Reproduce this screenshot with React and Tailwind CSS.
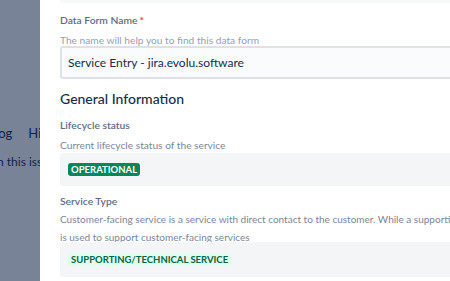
export default function App() {
  return (
    <div
      className="relative w-[450px] h-[281px] overflow-hidden bg-white flex"
      style={{ fontFamily: 'Lato, "Noto Sans", sans-serif' }}
    >
      {/* Backdrop page behind the overlay */}
      <div className="relative w-[40px] shrink-0 bg-white overflow-hidden">
        <div className="absolute left-[-8px] top-[124px] flex gap-[16px] whitespace-nowrap text-[13px] text-[#172b4d]">
          <span>Log</span>
          <span>History</span>
        </div>
        <div className="absolute left-[-3px] top-[153px] whitespace-nowrap text-[12px] text-[#172b4d]">
          n this issue
        </div>
        <div className="absolute inset-0 bg-[#091e42]/55"></div>
      </div>

      {/* Side panel */}
      <div className="flex-1 pl-[20px] flex flex-col text-[#172b4d]">
        <div className="h-[3px] bg-[#f7f8f9] rounded-b-[3px]"></div>

        <div className="mt-[10px] flex items-center text-[10.3px] font-semibold text-[#5e6c84] leading-[14px]">
          Data Form Name<span className="text-[#de350b] ml-[2px]">*</span>
        </div>
        <div className="mt-[6px] text-[10.2px] text-[#97a0af] leading-[14px]">
          The name will help you to find this data form
        </div>
        <div className="mt-[-1px] h-[33px] border-2 border-r-0 border-[#dfe1e6] bg-[#fafbfc] rounded-l-[3px] flex items-center pl-[6px] text-[12px] text-[#172b4d]">
          Service Entry - jira.evolu.software
        </div>

        <div className="mt-[11px] text-[14px] font-medium text-[#172b4d] leading-[18px]">
          General Information
        </div>

        <div className="mt-[10px] text-[10.3px] font-semibold text-[#5e6c84] leading-[14px]">
          Lifecycle status
        </div>
        <div className="mt-[6px] text-[10.2px] text-[#7a869a] leading-[14px]">
          Current lifecycle status of the service
        </div>
        <div className="mt-[1px] h-[33px] bg-[#f4f5f7] rounded-l-[3px] flex items-center pl-[8px]">
          <span className="bg-[#00875a] text-white text-[9.5px] font-bold leading-[13px] px-[3px] rounded-[3px]">
            OPERATIONAL
          </span>
        </div>

        <div className="mt-[8px] text-[10.3px] font-semibold text-[#5e6c84] leading-[14px]">
          Service Type
        </div>
        <div className="mt-[2px] text-[10px] text-[#7a869a] leading-[18px] whitespace-nowrap">
          Customer-facing service is a service with direct contact to the customer. While a supporting service
          <br />
          is used to support customer-facing services
        </div>
        <div className="mt-[-4px] h-[35px] bg-[#f4f5f7] rounded-l-[3px] flex items-center pl-[8px]">
          <span className="bg-[#e3fcef] text-[#006644] text-[9.5px] font-bold leading-[13px] px-[3px] rounded-[3px]">
            SUPPORTING/TECHNICAL SERVICE
          </span>
        </div>
      </div>
    </div>
  );
}
